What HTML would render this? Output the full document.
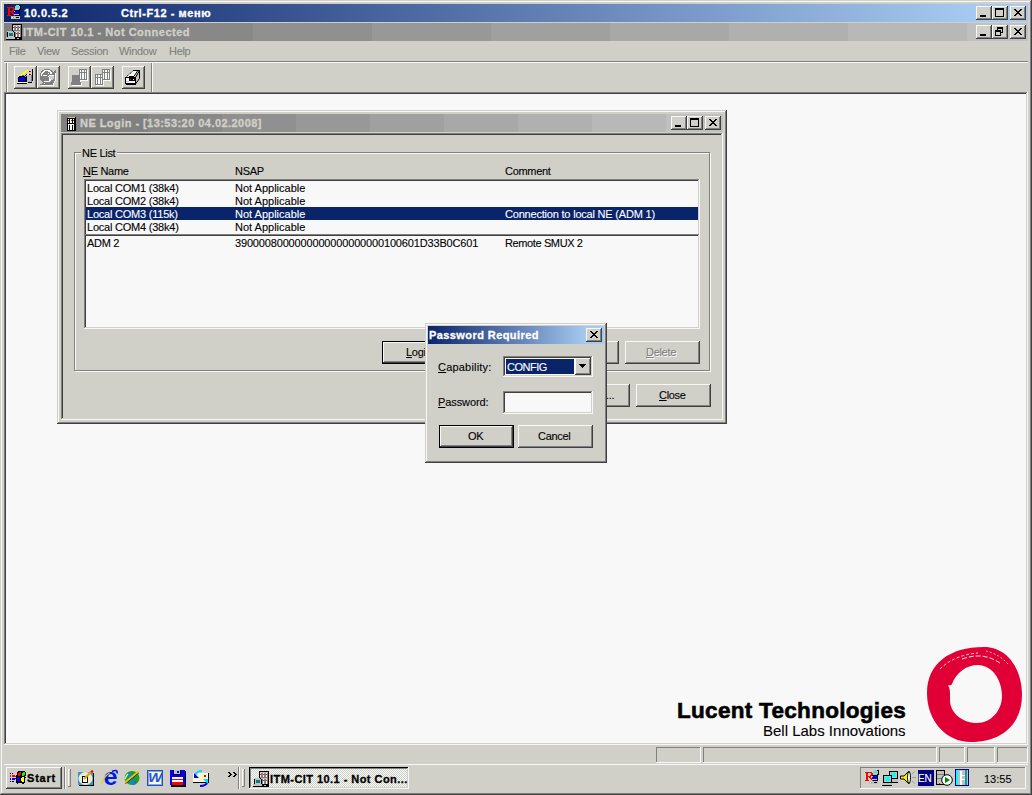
<!DOCTYPE html><html><head><meta charset="utf-8"><style>
html,body{margin:0;padding:0;width:1032px;height:795px;overflow:hidden;background:#D0D0C8;position:relative}
.a{position:absolute;display:block}
.t{position:absolute;white-space:pre;font-family:"Liberation Sans",sans-serif;line-height:13px;-webkit-text-stroke:0.1px currentColor}
u{text-decoration:underline;text-decoration-thickness:1px;text-underline-offset:1px}
</style></head><body>
<div class="a" style="left:0px;top:0px;width:1032px;height:795px;background:#D0D0C8;box-shadow:inset -1px -1px #404040,inset 1px 1px #D0D0C8,inset -2px -2px #808080,inset 2px 2px #F8F8F8;"></div>
<div class="a" style="left:4px;top:4px;width:1024px;height:18px;background:linear-gradient(to right,#0A246A 0%,#A6CAF0 95%,#A6CAF0 100%);"></div>
<div class="t" style="left:24px;top:7px;font-size:11px;font-weight:bold;color:#fff;letter-spacing:0.55px;-webkit-text-stroke:0.3px currentColor;">10.0.5.2</div>
<div class="t" style="left:121px;top:7px;font-size:11px;font-weight:bold;color:#fff;letter-spacing:0.57px;-webkit-text-stroke:0.3px currentColor;">Ctrl-F12 - меню</div>
<div class="a" style="left:976px;top:6px;width:16px;height:14px;background:#D0D0C8;box-shadow:inset -1px -1px #404040,inset 1px 1px #F8F8F8,inset -2px -2px #808080,inset 2px 2px #D0D0C8;"></div>
<div class="a" style="left:980px;top:15px;width:6px;height:2px;background:#000;"></div>
<div class="a" style="left:992px;top:6px;width:16px;height:14px;background:#D0D0C8;box-shadow:inset -1px -1px #404040,inset 1px 1px #F8F8F8,inset -2px -2px #808080,inset 2px 2px #D0D0C8;"></div>
<div class="a" style="left:995px;top:8px;width:9px;height:9px;border:1px solid #000;border-top-width:2px;box-sizing:border-box;"></div>
<div class="a" style="left:1010px;top:6px;width:16px;height:14px;background:#D0D0C8;box-shadow:inset -1px -1px #404040,inset 1px 1px #F8F8F8,inset -2px -2px #808080,inset 2px 2px #D0D0C8;"></div>
<svg class="a" style="left:1014px;top:9px" width="8" height="7" viewBox="0 0 8 7" shape-rendering="crispEdges"><rect x="0" y="0" width="1" height="1" fill="#000"/><rect x="1" y="0" width="1" height="1" fill="#000"/><rect x="6" y="0" width="1" height="1" fill="#000"/><rect x="7" y="0" width="1" height="1" fill="#000"/><rect x="1" y="1" width="1" height="1" fill="#000"/><rect x="2" y="1" width="1" height="1" fill="#000"/><rect x="5" y="1" width="1" height="1" fill="#000"/><rect x="6" y="1" width="1" height="1" fill="#000"/><rect x="2" y="2" width="1" height="1" fill="#000"/><rect x="3" y="2" width="1" height="1" fill="#000"/><rect x="4" y="2" width="1" height="1" fill="#000"/><rect x="5" y="2" width="1" height="1" fill="#000"/><rect x="3" y="3" width="1" height="1" fill="#000"/><rect x="4" y="3" width="1" height="1" fill="#000"/><rect x="2" y="4" width="1" height="1" fill="#000"/><rect x="3" y="4" width="1" height="1" fill="#000"/><rect x="4" y="4" width="1" height="1" fill="#000"/><rect x="5" y="4" width="1" height="1" fill="#000"/><rect x="1" y="5" width="1" height="1" fill="#000"/><rect x="2" y="5" width="1" height="1" fill="#000"/><rect x="5" y="5" width="1" height="1" fill="#000"/><rect x="6" y="5" width="1" height="1" fill="#000"/><rect x="0" y="6" width="1" height="1" fill="#000"/><rect x="1" y="6" width="1" height="1" fill="#000"/><rect x="6" y="6" width="1" height="1" fill="#000"/><rect x="7" y="6" width="1" height="1" fill="#000"/></svg>
<div class="a" style="left:4px;top:23px;width:1024px;height:18px;background:linear-gradient(to right,#808080 0.000%,#808080 12.695%,#888888 12.695%,#888888 24.316%,#909090 24.316%,#909090 35.938%,#989898 35.938%,#989898 47.559%,#a0a0a0 47.559%,#a0a0a0 59.180%,#a8a8a8 59.180%,#a8a8a8 70.801%,#b0b0b0 70.801%,#b0b0b0 82.422%,#b8b8b8 82.422%,#b8b8b8 94.043%,#c0c0c0 94.043%,#c0c0c0 100.000%);"></div>
<div class="t" style="left:23px;top:26px;font-size:11px;font-weight:bold;color:#D0D0C8;letter-spacing:0.51px;-webkit-text-stroke:0.3px currentColor;">ITM-CIT 10.1 - Not Connected</div>
<div class="a" style="left:976px;top:25px;width:16px;height:14px;background:#D0D0C8;box-shadow:inset -1px -1px #404040,inset 1px 1px #F8F8F8,inset -2px -2px #808080,inset 2px 2px #D0D0C8;"></div>
<div class="a" style="left:980px;top:34px;width:6px;height:2px;background:#000;"></div>
<div class="a" style="left:992px;top:25px;width:16px;height:14px;background:#D0D0C8;box-shadow:inset -1px -1px #404040,inset 1px 1px #F8F8F8,inset -2px -2px #808080,inset 2px 2px #D0D0C8;"></div>
<div class="a" style="left:997px;top:27px;width:6px;height:6px;border:1px solid #000;border-top-width:2px;box-sizing:border-box;"></div>
<div class="a" style="left:995px;top:30px;width:6px;height:6px;background:#D0D0C8;border:1px solid #000;border-top-width:2px;box-sizing:border-box;"></div>
<div class="a" style="left:1010px;top:25px;width:16px;height:14px;background:#D0D0C8;box-shadow:inset -1px -1px #404040,inset 1px 1px #F8F8F8,inset -2px -2px #808080,inset 2px 2px #D0D0C8;"></div>
<svg class="a" style="left:1014px;top:28px" width="8" height="7" viewBox="0 0 8 7" shape-rendering="crispEdges"><rect x="0" y="0" width="1" height="1" fill="#000"/><rect x="1" y="0" width="1" height="1" fill="#000"/><rect x="6" y="0" width="1" height="1" fill="#000"/><rect x="7" y="0" width="1" height="1" fill="#000"/><rect x="1" y="1" width="1" height="1" fill="#000"/><rect x="2" y="1" width="1" height="1" fill="#000"/><rect x="5" y="1" width="1" height="1" fill="#000"/><rect x="6" y="1" width="1" height="1" fill="#000"/><rect x="2" y="2" width="1" height="1" fill="#000"/><rect x="3" y="2" width="1" height="1" fill="#000"/><rect x="4" y="2" width="1" height="1" fill="#000"/><rect x="5" y="2" width="1" height="1" fill="#000"/><rect x="3" y="3" width="1" height="1" fill="#000"/><rect x="4" y="3" width="1" height="1" fill="#000"/><rect x="2" y="4" width="1" height="1" fill="#000"/><rect x="3" y="4" width="1" height="1" fill="#000"/><rect x="4" y="4" width="1" height="1" fill="#000"/><rect x="5" y="4" width="1" height="1" fill="#000"/><rect x="1" y="5" width="1" height="1" fill="#000"/><rect x="2" y="5" width="1" height="1" fill="#000"/><rect x="5" y="5" width="1" height="1" fill="#000"/><rect x="6" y="5" width="1" height="1" fill="#000"/><rect x="0" y="6" width="1" height="1" fill="#000"/><rect x="1" y="6" width="1" height="1" fill="#000"/><rect x="6" y="6" width="1" height="1" fill="#000"/><rect x="7" y="6" width="1" height="1" fill="#000"/></svg>
<div class="t" style="left:9px;top:45px;font-size:11px;font-weight:normal;color:#808080;letter-spacing:-0.3px;">File</div>
<div class="t" style="left:37px;top:45px;font-size:11px;font-weight:normal;color:#808080;letter-spacing:-0.3px;">View</div>
<div class="t" style="left:71px;top:45px;font-size:11px;font-weight:normal;color:#808080;letter-spacing:-0.3px;">Session</div>
<div class="t" style="left:119px;top:45px;font-size:11px;font-weight:normal;color:#808080;letter-spacing:-0.3px;">Window</div>
<div class="t" style="left:169px;top:45px;font-size:11px;font-weight:normal;color:#808080;letter-spacing:-0.3px;">Help</div>
<div class="a" style="left:4px;top:61px;width:1024px;height:1px;background:#808080;"></div>
<div class="a" style="left:4px;top:62px;width:1024px;height:1px;background:#F8F8F8;"></div>
<div class="a" style="left:6px;top:63px;width:1px;height:29px;background:#808080;"></div>
<div class="a" style="left:7px;top:63px;width:1px;height:29px;background:#F8F8F8;"></div>
<div class="a" style="left:14px;top:66px;width:23px;height:23px;background:#D0D0C8;box-shadow:inset -1px -1px #404040,inset 1px 1px #F8F8F8,inset -2px -2px #808080,inset 2px 2px #D0D0C8;"></div>
<div class="a" style="left:37px;top:66px;width:23px;height:23px;background:#D0D0C8;box-shadow:inset -1px -1px #404040,inset 1px 1px #F8F8F8,inset -2px -2px #808080,inset 2px 2px #D0D0C8;"></div>
<div class="a" style="left:68px;top:66px;width:23px;height:23px;background:#D0D0C8;box-shadow:inset -1px -1px #404040,inset 1px 1px #F8F8F8,inset -2px -2px #808080,inset 2px 2px #D0D0C8;"></div>
<div class="a" style="left:91px;top:66px;width:23px;height:23px;background:#D0D0C8;box-shadow:inset -1px -1px #404040,inset 1px 1px #F8F8F8,inset -2px -2px #808080,inset 2px 2px #D0D0C8;"></div>
<div class="a" style="left:122px;top:66px;width:23px;height:23px;background:#D0D0C8;box-shadow:inset -1px -1px #404040,inset 1px 1px #F8F8F8,inset -2px -2px #808080,inset 2px 2px #D0D0C8;"></div>
<div class="a" style="left:151px;top:63px;width:1px;height:29px;background:#808080;"></div>
<div class="a" style="left:152px;top:63px;width:1px;height:29px;background:#F8F8F8;"></div>
<div class="a" style="left:4px;top:92px;width:1024px;height:653px;background:#F8F8F8;box-shadow:inset -1px -1px #F8F8F8,inset 1px 1px #808080,inset -2px -2px #D0D0C8,inset 2px 2px #404040;"></div>
<div class="a" style="left:656px;top:747px;width:45px;height:16px;background:#D0D0C8;box-shadow:inset -1px -1px #F8F8F8,inset 1px 1px #808080;"></div>
<div class="a" style="left:703px;top:747px;width:234px;height:16px;background:#D0D0C8;box-shadow:inset -1px -1px #F8F8F8,inset 1px 1px #808080;"></div>
<div class="a" style="left:939px;top:747px;width:26px;height:16px;background:#D0D0C8;box-shadow:inset -1px -1px #F8F8F8,inset 1px 1px #808080;"></div>
<div class="a" style="left:967px;top:747px;width:28px;height:16px;background:#D0D0C8;box-shadow:inset -1px -1px #F8F8F8,inset 1px 1px #808080;"></div>
<div class="a" style="left:997px;top:747px;width:31px;height:16px;background:#D0D0C8;box-shadow:inset -1px -1px #F8F8F8,inset 1px 1px #808080;"></div>
<div class="a" style="left:4px;top:764px;width:1024px;height:1px;background:#F8F8F8;"></div>
<div class="a" style="left:6px;top:767px;width:56px;height:22px;background:#D0D0C8;box-shadow:inset -1px -1px #404040,inset 1px 1px #F8F8F8,inset -2px -2px #808080,inset 2px 2px #D0D0C8;"></div>
<div class="t" style="left:27px;top:772px;font-size:11px;font-weight:bold;color:#000;letter-spacing:0.8px;-webkit-text-stroke:0.3px currentColor;">Start</div>
<div class="a" style="left:64px;top:767px;width:1px;height:22px;background:#808080;"></div>
<div class="a" style="left:65px;top:767px;width:1px;height:22px;background:#F8F8F8;"></div>
<div class="a" style="left:68px;top:769px;width:3px;height:18px;box-shadow:inset -1px -1px #808080,inset 1px 1px #F8F8F8;"></div>
<div class="a" style="left:238px;top:767px;width:1px;height:22px;background:#808080;"></div>
<div class="a" style="left:239px;top:767px;width:1px;height:22px;background:#F8F8F8;"></div>
<div class="a" style="left:242px;top:769px;width:3px;height:18px;box-shadow:inset -1px -1px #808080,inset 1px 1px #F8F8F8;"></div>
<div class="a" style="left:249px;top:767px;width:160px;height:22px;background-color:#D0D0C8;background-image:repeating-conic-gradient(#F8FCF8 0 25%,#D0D0C8 0 50%);background-size:2px 2px;box-shadow:inset -1px -1px #F8F8F8,inset 1px 1px #000,inset -2px -2px #D0D0C8,inset 2px 2px #808080;"></div>
<div class="t" style="left:270px;top:773px;font-size:11px;font-weight:bold;color:#000;letter-spacing:0.45px;-webkit-text-stroke:0.3px currentColor;">ITM-CIT 10.1 - Not Con...</div>
<div class="a" style="left:860px;top:767px;width:166px;height:22px;background:#D0D0C8;box-shadow:inset -1px -1px #F8F8F8,inset 1px 1px #808080;"></div>
<div class="t" style="left:984px;top:773px;font-size:11px;font-weight:normal;color:#000;letter-spacing:0px;">13:55</div>
<div class="a" style="left:57px;top:110px;width:670px;height:314px;background:#D0D0C8;box-shadow:inset -1px -1px #404040,inset 1px 1px #D0D0C8,inset -2px -2px #808080,inset 2px 2px #F8F8F8;"></div>
<div class="a" style="left:61px;top:114px;width:662px;height:18px;background:linear-gradient(to right,#808080 0.000%,#808080 13.142%,#888888 13.142%,#888888 24.320%,#909090 24.320%,#909090 35.498%,#989898 35.498%,#989898 46.677%,#a0a0a0 46.677%,#a0a0a0 57.855%,#a8a8a8 57.855%,#a8a8a8 69.033%,#b0b0b0 69.033%,#b0b0b0 80.211%,#b8b8b8 80.211%,#b8b8b8 91.390%,#c0c0c0 91.390%,#c0c0c0 100.000%);"></div>
<div class="t" style="left:80px;top:117px;font-size:11px;font-weight:bold;color:#D0D0C8;letter-spacing:0.45px;-webkit-text-stroke:0.3px currentColor;">NE Login - [13:53:20 04.02.2008]</div>
<div class="a" style="left:671px;top:116px;width:16px;height:14px;background:#D0D0C8;box-shadow:inset -1px -1px #404040,inset 1px 1px #F8F8F8,inset -2px -2px #808080,inset 2px 2px #D0D0C8;"></div>
<div class="a" style="left:675px;top:125px;width:6px;height:2px;background:#000;"></div>
<div class="a" style="left:687px;top:116px;width:16px;height:14px;background:#D0D0C8;box-shadow:inset -1px -1px #404040,inset 1px 1px #F8F8F8,inset -2px -2px #808080,inset 2px 2px #D0D0C8;"></div>
<div class="a" style="left:690px;top:118px;width:9px;height:9px;border:1px solid #000;border-top-width:2px;box-sizing:border-box;"></div>
<div class="a" style="left:705px;top:116px;width:16px;height:14px;background:#D0D0C8;box-shadow:inset -1px -1px #404040,inset 1px 1px #F8F8F8,inset -2px -2px #808080,inset 2px 2px #D0D0C8;"></div>
<svg class="a" style="left:709px;top:119px" width="8" height="7" viewBox="0 0 8 7" shape-rendering="crispEdges"><rect x="0" y="0" width="1" height="1" fill="#000"/><rect x="1" y="0" width="1" height="1" fill="#000"/><rect x="6" y="0" width="1" height="1" fill="#000"/><rect x="7" y="0" width="1" height="1" fill="#000"/><rect x="1" y="1" width="1" height="1" fill="#000"/><rect x="2" y="1" width="1" height="1" fill="#000"/><rect x="5" y="1" width="1" height="1" fill="#000"/><rect x="6" y="1" width="1" height="1" fill="#000"/><rect x="2" y="2" width="1" height="1" fill="#000"/><rect x="3" y="2" width="1" height="1" fill="#000"/><rect x="4" y="2" width="1" height="1" fill="#000"/><rect x="5" y="2" width="1" height="1" fill="#000"/><rect x="3" y="3" width="1" height="1" fill="#000"/><rect x="4" y="3" width="1" height="1" fill="#000"/><rect x="2" y="4" width="1" height="1" fill="#000"/><rect x="3" y="4" width="1" height="1" fill="#000"/><rect x="4" y="4" width="1" height="1" fill="#000"/><rect x="5" y="4" width="1" height="1" fill="#000"/><rect x="1" y="5" width="1" height="1" fill="#000"/><rect x="2" y="5" width="1" height="1" fill="#000"/><rect x="5" y="5" width="1" height="1" fill="#000"/><rect x="6" y="5" width="1" height="1" fill="#000"/><rect x="0" y="6" width="1" height="1" fill="#000"/><rect x="1" y="6" width="1" height="1" fill="#000"/><rect x="6" y="6" width="1" height="1" fill="#000"/><rect x="7" y="6" width="1" height="1" fill="#000"/></svg>
<div class="a" style="left:61px;top:133px;width:662px;height:287px;background:#D0D0C8;box-shadow:inset -1px -1px #F8F8F8,inset 1px 1px #808080,inset -2px -2px #D0D0C8,inset 2px 2px #404040;"></div>
<div class="a" style="left:75px;top:153px;width:636px;height:219px;border:1px solid #F8F8F8;box-sizing:border-box;"></div>
<div class="a" style="left:74px;top:152px;width:636px;height:219px;border:1px solid #808080;box-sizing:border-box;"></div>
<div class="a" style="left:81px;top:145px;width:36px;height:13px;background:#D0D0C8;"></div>
<div class="t" style="left:82px;top:147px;font-size:11px;font-weight:normal;color:#000;letter-spacing:-0.3px;">NE List</div>
<div class="t" style="left:83px;top:165px;font-size:11px;font-weight:normal;color:#000;letter-spacing:-0.3px;"><u>N</u>E Name</div>
<div class="t" style="left:235px;top:165px;font-size:11px;font-weight:normal;color:#000;letter-spacing:-0.3px;">NSAP</div>
<div class="t" style="left:505px;top:165px;font-size:11px;font-weight:normal;color:#000;letter-spacing:-0.3px;">Comment</div>
<div class="a" style="left:84px;top:179px;width:616px;height:62px;background:#F8F8F8;box-shadow:inset -1px -1px #F8F8F8,inset 1px 1px #808080,inset -2px -2px #D0D0C8,inset 2px 2px #404040;"></div>
<div class="t" style="left:87px;top:182px;font-size:11px;font-weight:normal;color:#000;letter-spacing:-0.22px;">Local COM1 (38k4)</div>
<div class="t" style="left:235px;top:182px;font-size:11px;font-weight:normal;color:#000;letter-spacing:0px;">Not Applicable</div>
<div class="t" style="left:87px;top:195px;font-size:11px;font-weight:normal;color:#000;letter-spacing:-0.22px;">Local COM2 (38k4)</div>
<div class="t" style="left:235px;top:195px;font-size:11px;font-weight:normal;color:#000;letter-spacing:0px;">Not Applicable</div>
<div class="a" style="left:86px;top:207px;width:612px;height:13px;background:#0A246A;"></div>
<div class="t" style="left:87px;top:208px;font-size:11px;font-weight:normal;color:#fff;letter-spacing:-0.22px;">Local COM3 (115k)</div>
<div class="t" style="left:235px;top:208px;font-size:11px;font-weight:normal;color:#fff;letter-spacing:0px;">Not Applicable</div>
<div class="t" style="left:505px;top:208px;font-size:11px;font-weight:normal;color:#fff;letter-spacing:-0.2px;">Connection to local NE (ADM 1)</div>
<div class="t" style="left:87px;top:221px;font-size:11px;font-weight:normal;color:#000;letter-spacing:-0.22px;">Local COM4 (38k4)</div>
<div class="t" style="left:235px;top:221px;font-size:11px;font-weight:normal;color:#000;letter-spacing:0px;">Not Applicable</div>
<div class="a" style="left:84px;top:234px;width:616px;height:95px;background:#F8F8F8;box-shadow:inset -1px -1px #F8F8F8,inset 1px 1px #808080,inset -2px -2px #D0D0C8,inset 2px 2px #404040;"></div>
<div class="t" style="left:87px;top:237px;font-size:11px;font-weight:normal;color:#000;letter-spacing:-0.3px;">ADM 2</div>
<div class="t" style="left:235px;top:237px;font-size:11px;font-weight:normal;color:#000;letter-spacing:-0.16px;">3900008000000000000000000100601D33B0C601</div>
<div class="t" style="left:505px;top:237px;font-size:11px;font-weight:normal;color:#000;letter-spacing:-0.38px;">Remote SMUX 2</div>
<div class="a" style="left:382px;top:341px;width:75px;height:23px;background:#000;"></div>
<div class="a" style="left:383px;top:342px;width:73px;height:21px;background:#D0D0C8;box-shadow:inset -1px -1px #404040,inset 1px 1px #F8F8F8,inset -2px -2px #808080,inset 2px 2px #D0D0C8;"></div>
<div class="t" style="left:406px;top:346px;font-size:11px;font-weight:normal;color:#000;letter-spacing:-0.3px;"><u>L</u>ogin</div>
<div class="a" style="left:463px;top:341px;width:75px;height:23px;background:#D0D0C8;box-shadow:inset -1px -1px #404040,inset 1px 1px #F8F8F8,inset -2px -2px #808080,inset 2px 2px #D0D0C8;"></div>
<div class="a" style="left:544px;top:341px;width:75px;height:23px;background:#D0D0C8;box-shadow:inset -1px -1px #404040,inset 1px 1px #F8F8F8,inset -2px -2px #808080,inset 2px 2px #D0D0C8;"></div>
<div class="a" style="left:625px;top:341px;width:75px;height:23px;background:#D0D0C8;box-shadow:inset -1px -1px #404040,inset 1px 1px #F8F8F8,inset -2px -2px #808080,inset 2px 2px #D0D0C8;"></div>
<div class="t" style="left:647px;top:347px;font-size:11px;font-weight:normal;color:#F8F8F8;letter-spacing:-0.3px;"><u>D</u>elete</div>
<div class="t" style="left:646px;top:346px;font-size:11px;font-weight:normal;color:#808080;letter-spacing:-0.3px;"><u>D</u>elete</div>
<div class="a" style="left:555px;top:384px;width:75px;height:23px;background:#D0D0C8;box-shadow:inset -1px -1px #404040,inset 1px 1px #F8F8F8,inset -2px -2px #808080,inset 2px 2px #D0D0C8;"></div>
<div class="t" style="left:606px;top:389px;font-size:11px;font-weight:normal;color:#000;letter-spacing:-0.3px;">...</div>
<div class="a" style="left:636px;top:384px;width:75px;height:23px;background:#D0D0C8;box-shadow:inset -1px -1px #404040,inset 1px 1px #F8F8F8,inset -2px -2px #808080,inset 2px 2px #D0D0C8;"></div>
<div class="t" style="left:659px;top:389px;font-size:11px;font-weight:normal;color:#000;letter-spacing:-0.3px;"><u>C</u>lose</div>
<div class="a" style="left:425px;top:323px;width:182px;height:140px;background:#D0D0C8;box-shadow:inset -1px -1px #404040,inset 1px 1px #D0D0C8,inset -2px -2px #808080,inset 2px 2px #F8F8F8;"></div>
<div class="a" style="left:428px;top:326px;width:176px;height:18px;background:linear-gradient(to right,#0A246A 0%,#A6CAF0 90%,#A6CAF0 100%);"></div>
<div class="t" style="left:429px;top:329px;font-size:11px;font-weight:bold;color:#fff;letter-spacing:0.42px;-webkit-text-stroke:0.3px currentColor;">Password Required</div>
<div class="a" style="left:586px;top:328px;width:16px;height:14px;background:#D0D0C8;box-shadow:inset -1px -1px #404040,inset 1px 1px #F8F8F8,inset -2px -2px #808080,inset 2px 2px #D0D0C8;"></div>
<svg class="a" style="left:590px;top:331px" width="8" height="7" viewBox="0 0 8 7" shape-rendering="crispEdges"><rect x="0" y="0" width="1" height="1" fill="#000"/><rect x="1" y="0" width="1" height="1" fill="#000"/><rect x="6" y="0" width="1" height="1" fill="#000"/><rect x="7" y="0" width="1" height="1" fill="#000"/><rect x="1" y="1" width="1" height="1" fill="#000"/><rect x="2" y="1" width="1" height="1" fill="#000"/><rect x="5" y="1" width="1" height="1" fill="#000"/><rect x="6" y="1" width="1" height="1" fill="#000"/><rect x="2" y="2" width="1" height="1" fill="#000"/><rect x="3" y="2" width="1" height="1" fill="#000"/><rect x="4" y="2" width="1" height="1" fill="#000"/><rect x="5" y="2" width="1" height="1" fill="#000"/><rect x="3" y="3" width="1" height="1" fill="#000"/><rect x="4" y="3" width="1" height="1" fill="#000"/><rect x="2" y="4" width="1" height="1" fill="#000"/><rect x="3" y="4" width="1" height="1" fill="#000"/><rect x="4" y="4" width="1" height="1" fill="#000"/><rect x="5" y="4" width="1" height="1" fill="#000"/><rect x="1" y="5" width="1" height="1" fill="#000"/><rect x="2" y="5" width="1" height="1" fill="#000"/><rect x="5" y="5" width="1" height="1" fill="#000"/><rect x="6" y="5" width="1" height="1" fill="#000"/><rect x="0" y="6" width="1" height="1" fill="#000"/><rect x="1" y="6" width="1" height="1" fill="#000"/><rect x="6" y="6" width="1" height="1" fill="#000"/><rect x="7" y="6" width="1" height="1" fill="#000"/></svg>
<div class="t" style="left:438px;top:361px;font-size:11px;font-weight:normal;color:#000;letter-spacing:0.2px;"><u>C</u>apability:</div>
<div class="a" style="left:503px;top:356px;width:90px;height:21px;background:#F8F8F8;box-shadow:inset -1px -1px #F8F8F8,inset 1px 1px #808080,inset -2px -2px #D0D0C8,inset 2px 2px #404040;"></div>
<div class="a" style="left:506px;top:359px;width:68px;height:15px;background:#0A246A;"></div>
<div class="t" style="left:507px;top:361px;font-size:11px;font-weight:normal;color:#fff;letter-spacing:-0.5px;">CONFIG</div>
<div class="a" style="left:575px;top:358px;width:16px;height:17px;background:#D0D0C8;box-shadow:inset -1px -1px #404040,inset 1px 1px #F8F8F8,inset -2px -2px #808080,inset 2px 2px #D0D0C8;"></div>
<svg class="a" style="left:579px;top:364px" width="7" height="4" viewBox="0 0 7 4" shape-rendering="crispEdges"><rect x="0" y="0" width="7" height="1" fill="#000"/><rect x="1" y="1" width="5" height="1" fill="#000"/><rect x="2" y="2" width="3" height="1" fill="#000"/><rect x="3" y="3" width="1" height="1" fill="#000"/></svg>
<div class="t" style="left:438px;top:396px;font-size:11px;font-weight:normal;color:#000;letter-spacing:-0.1px;"><u>P</u>assword:</div>
<div class="a" style="left:503px;top:391px;width:90px;height:23px;background:#F8F8F8;box-shadow:inset -1px -1px #F8F8F8,inset 1px 1px #808080,inset -2px -2px #D0D0C8,inset 2px 2px #404040;"></div>
<div class="a" style="left:439px;top:425px;width:75px;height:23px;background:#000;"></div>
<div class="a" style="left:440px;top:426px;width:73px;height:21px;background:#D0D0C8;box-shadow:inset -1px -1px #404040,inset 1px 1px #F8F8F8,inset -2px -2px #808080,inset 2px 2px #D0D0C8;"></div>
<div class="t" style="left:468px;top:430px;font-size:11px;font-weight:normal;color:#000;letter-spacing:-0.3px;">OK</div>
<div class="a" style="left:518px;top:425px;width:75px;height:23px;background:#D0D0C8;box-shadow:inset -1px -1px #404040,inset 1px 1px #F8F8F8,inset -2px -2px #808080,inset 2px 2px #D0D0C8;"></div>
<div class="t" style="left:538px;top:430px;font-size:11px;font-weight:normal;color:#000;letter-spacing:-0.3px;">Cancel</div>
<div class="t" style="left:677px;top:698px;font-size:22.5px;font-weight:bold;color:#000;letter-spacing:0.3px;line-height:25px;-webkit-text-stroke:0.6px #000;">Lucent Technologies</div>
<div class="t" style="left:763px;top:722px;font-size:15px;font-weight:normal;color:#000;letter-spacing:0px;line-height:17px;">Bell Labs Innovations</div>
<svg class="a" style="left:926px;top:645px" width="98" height="99" viewBox="0 0 98 99" shape-rendering="crispEdges"><g shape-rendering="geometricPrecision"><path fill="#E10036" fill-rule="evenodd" d="M58,2 C80,2 96,22 96,50 C96,79 76,97 45,97 C20,97 1,76 1,48 C1,19 23,2 58,2 Z M52,20 C65.3,20 76,33.9 76,51 C76,65.9 64.8,78 51,78 C36.1,78 24,67.7 24,55 C24,49 24.5,44 22,40.5 C24,40 25.5,40.5 26,39 C30,28 40,20 52,20 Z"/><path d="M14,24 C24,14 38,9 52,8" stroke="#F8F8F8" stroke-width="0.8" fill="none" stroke-dasharray="3,2"/><path d="M36,14 C50,9 62,10 74,18" stroke="#F8F8F8" stroke-width="0.9" fill="none" stroke-dasharray="5,2"/><path d="M60,6 C68,8 76,12 82,19" stroke="#F8F8F8" stroke-width="0.7" fill="none" stroke-dasharray="2,2"/></g></svg>
<svg class="a" style="left:6px;top:5px" width="16" height="14" shape-rendering="crispEdges"><rect x="10" y="0" width="3" height="1" fill="#C0C0C0"/><rect x="13" y="0" width="2" height="1" fill="#000000"/><rect x="9" y="1" width="1" height="1" fill="#C0C0C0"/><rect x="10" y="1" width="3" height="1" fill="#00FFFF"/><rect x="13" y="1" width="1" height="1" fill="#C0C0C0"/><rect x="14" y="1" width="1" height="1" fill="#000000"/><rect x="1" y="2" width="7" height="1" fill="#FF0000"/><rect x="9" y="2" width="1" height="1" fill="#C0C0C0"/><rect x="10" y="2" width="3" height="1" fill="#00FFFF"/><rect x="13" y="2" width="1" height="1" fill="#C0C0C0"/><rect x="14" y="2" width="1" height="1" fill="#000000"/><rect x="2" y="3" width="2" height="1" fill="#FF0000"/><rect x="7" y="3" width="2" height="1" fill="#FF0000"/><rect x="9" y="3" width="5" height="1" fill="#C0C0C0"/><rect x="14" y="3" width="1" height="1" fill="#000000"/><rect x="2" y="4" width="2" height="1" fill="#FF0000"/><rect x="7" y="4" width="2" height="1" fill="#FF0000"/><rect x="9" y="4" width="4" height="1" fill="#C0C0C0"/><rect x="13" y="4" width="2" height="1" fill="#000000"/><rect x="2" y="5" width="2" height="1" fill="#FF0000"/><rect x="6" y="5" width="2" height="1" fill="#FF0000"/><rect x="8" y="5" width="6" height="1" fill="#000000"/><rect x="2" y="6" width="5" height="1" fill="#FF0000"/><rect x="8" y="6" width="1" height="1" fill="#00FFFF"/><rect x="9" y="6" width="4" height="1" fill="#0000FF"/><rect x="13" y="6" width="1" height="1" fill="#000000"/><rect x="2" y="7" width="2" height="1" fill="#FF0000"/><rect x="5" y="7" width="2" height="1" fill="#FF0000"/><rect x="8" y="7" width="5" height="1" fill="#0000FF"/><rect x="13" y="7" width="1" height="1" fill="#000000"/><rect x="2" y="8" width="2" height="1" fill="#FF0000"/><rect x="6" y="8" width="2" height="1" fill="#FF0000"/><rect x="8" y="8" width="5" height="1" fill="#0000FF"/><rect x="13" y="8" width="1" height="1" fill="#000000"/><rect x="2" y="9" width="2" height="1" fill="#FF0000"/><rect x="7" y="9" width="1" height="1" fill="#FF0000"/><rect x="8" y="9" width="5" height="1" fill="#C0C0C0"/><rect x="13" y="9" width="1" height="1" fill="#000000"/><rect x="1" y="10" width="4" height="1" fill="#FF0000"/><rect x="8" y="10" width="1" height="1" fill="#FF0000"/><rect x="9" y="10" width="5" height="1" fill="#000000"/><rect x="5" y="11" width="9" height="1" fill="#C0C0C0"/><rect x="5" y="12" width="1" height="1" fill="#C0C0C0"/><rect x="6" y="12" width="1" height="1" fill="#F8FCF8"/><rect x="7" y="12" width="1" height="1" fill="#00FF00"/><rect x="8" y="12" width="2" height="1" fill="#C0C0C0"/><rect x="10" y="12" width="3" height="1" fill="#000000"/><rect x="13" y="12" width="1" height="1" fill="#C0C0C0"/><rect x="5" y="13" width="9" height="1" fill="#C0C0C0"/></svg>
<svg class="a" style="left:6px;top:24px" width="16" height="16" shape-rendering="crispEdges"><rect x="6" y="0" width="10" height="1" fill="#000000"/><rect x="6" y="1" width="1" height="1" fill="#000000"/><rect x="7" y="1" width="8" height="1" fill="#C0C0C0"/><rect x="15" y="1" width="1" height="1" fill="#000000"/><rect x="6" y="2" width="1" height="1" fill="#000000"/><rect x="7" y="2" width="1" height="1" fill="#F8FCF8"/><rect x="8" y="2" width="2" height="1" fill="#808080"/><rect x="10" y="2" width="1" height="1" fill="#F8FCF8"/><rect x="11" y="2" width="2" height="1" fill="#808080"/><rect x="13" y="2" width="1" height="1" fill="#F8FCF8"/><rect x="14" y="2" width="1" height="1" fill="#808080"/><rect x="15" y="2" width="1" height="1" fill="#000000"/><rect x="6" y="3" width="1" height="1" fill="#000000"/><rect x="7" y="3" width="1" height="1" fill="#FF0000"/><rect x="8" y="3" width="2" height="1" fill="#808080"/><rect x="10" y="3" width="1" height="1" fill="#FF0000"/><rect x="11" y="3" width="2" height="1" fill="#808080"/><rect x="13" y="3" width="1" height="1" fill="#FF0000"/><rect x="14" y="3" width="1" height="1" fill="#808080"/><rect x="15" y="3" width="1" height="1" fill="#000000"/><rect x="6" y="4" width="1" height="1" fill="#000000"/><rect x="7" y="4" width="1" height="1" fill="#F8FCF8"/><rect x="8" y="4" width="2" height="1" fill="#808080"/><rect x="10" y="4" width="1" height="1" fill="#F8FCF8"/><rect x="11" y="4" width="2" height="1" fill="#808080"/><rect x="13" y="4" width="1" height="1" fill="#F8FCF8"/><rect x="14" y="4" width="1" height="1" fill="#808080"/><rect x="15" y="4" width="1" height="1" fill="#000000"/><rect x="6" y="5" width="1" height="1" fill="#000000"/><rect x="7" y="5" width="1" height="1" fill="#F8FCF8"/><rect x="8" y="5" width="2" height="1" fill="#808080"/><rect x="10" y="5" width="1" height="1" fill="#F8FCF8"/><rect x="11" y="5" width="2" height="1" fill="#808080"/><rect x="13" y="5" width="1" height="1" fill="#F8FCF8"/><rect x="14" y="5" width="1" height="1" fill="#808080"/><rect x="15" y="5" width="1" height="1" fill="#000000"/><rect x="6" y="6" width="1" height="1" fill="#000000"/><rect x="7" y="6" width="8" height="1" fill="#808080"/><rect x="15" y="6" width="1" height="1" fill="#000000"/><rect x="1" y="7" width="6" height="1" fill="#C0C0C0"/><rect x="7" y="7" width="1" height="1" fill="#000000"/><rect x="8" y="7" width="6" height="1" fill="#C0C0C0"/><rect x="14" y="7" width="1" height="1" fill="#808080"/><rect x="15" y="7" width="1" height="1" fill="#000000"/><rect x="1" y="8" width="1" height="1" fill="#000000"/><rect x="2" y="8" width="6" height="1" fill="#C0C0C0"/><rect x="8" y="8" width="1" height="1" fill="#000000"/><rect x="9" y="8" width="1" height="1" fill="#808080"/><rect x="10" y="8" width="1" height="1" fill="#F8FCF8"/><rect x="11" y="8" width="2" height="1" fill="#808080"/><rect x="13" y="8" width="1" height="1" fill="#F8FCF8"/><rect x="14" y="8" width="1" height="1" fill="#808080"/><rect x="15" y="8" width="1" height="1" fill="#000000"/><rect x="1" y="9" width="1" height="1" fill="#000000"/><rect x="2" y="9" width="1" height="1" fill="#C0C0C0"/><rect x="3" y="9" width="4" height="1" fill="#008080"/><rect x="7" y="9" width="1" height="1" fill="#C0C0C0"/><rect x="8" y="9" width="1" height="1" fill="#000000"/><rect x="9" y="9" width="1" height="1" fill="#808080"/><rect x="10" y="9" width="1" height="1" fill="#FF0000"/><rect x="11" y="9" width="2" height="1" fill="#808080"/><rect x="13" y="9" width="1" height="1" fill="#FF0000"/><rect x="14" y="9" width="1" height="1" fill="#808080"/><rect x="15" y="9" width="1" height="1" fill="#000000"/><rect x="1" y="10" width="1" height="1" fill="#000000"/><rect x="2" y="10" width="1" height="1" fill="#C0C0C0"/><rect x="3" y="10" width="4" height="1" fill="#008080"/><rect x="7" y="10" width="1" height="1" fill="#C0C0C0"/><rect x="8" y="10" width="1" height="1" fill="#000000"/><rect x="9" y="10" width="1" height="1" fill="#808080"/><rect x="10" y="10" width="1" height="1" fill="#F8FCF8"/><rect x="11" y="10" width="2" height="1" fill="#808080"/><rect x="13" y="10" width="1" height="1" fill="#F8FCF8"/><rect x="14" y="10" width="1" height="1" fill="#808080"/><rect x="15" y="10" width="1" height="1" fill="#000000"/><rect x="1" y="11" width="1" height="1" fill="#000000"/><rect x="2" y="11" width="1" height="1" fill="#C0C0C0"/><rect x="3" y="11" width="4" height="1" fill="#008080"/><rect x="7" y="11" width="1" height="1" fill="#C0C0C0"/><rect x="8" y="11" width="1" height="1" fill="#000000"/><rect x="9" y="11" width="1" height="1" fill="#808080"/><rect x="10" y="11" width="1" height="1" fill="#F8FCF8"/><rect x="11" y="11" width="2" height="1" fill="#808080"/><rect x="13" y="11" width="1" height="1" fill="#F8FCF8"/><rect x="14" y="11" width="1" height="1" fill="#808080"/><rect x="15" y="11" width="1" height="1" fill="#000000"/><rect x="1" y="12" width="1" height="1" fill="#000000"/><rect x="2" y="12" width="6" height="1" fill="#C0C0C0"/><rect x="8" y="12" width="1" height="1" fill="#000000"/><rect x="9" y="12" width="1" height="1" fill="#808080"/><rect x="10" y="12" width="1" height="1" fill="#F8FCF8"/><rect x="11" y="12" width="2" height="1" fill="#808080"/><rect x="13" y="12" width="1" height="1" fill="#F8FCF8"/><rect x="14" y="12" width="1" height="1" fill="#808080"/><rect x="15" y="12" width="1" height="1" fill="#000000"/><rect x="0" y="13" width="9" height="1" fill="#C0C0C0"/><rect x="9" y="13" width="7" height="1" fill="#000000"/><rect x="0" y="14" width="9" height="1" fill="#C0C0C0"/><rect x="9" y="14" width="2" height="1" fill="#000000"/><rect x="11" y="14" width="2" height="1" fill="#C0C0C0"/><rect x="13" y="14" width="3" height="1" fill="#000000"/><rect x="0" y="15" width="16" height="1" fill="#000000"/></svg>
<svg class="a" style="left:67px;top:117px" width="9" height="14" shape-rendering="crispEdges"><rect x="1" y="0" width="7" height="1" fill="#C0C0C0"/><rect x="8" y="0" width="1" height="1" fill="#000000"/><rect x="0" y="1" width="9" height="1" fill="#000000"/><rect x="0" y="2" width="1" height="1" fill="#000000"/><rect x="1" y="2" width="1" height="1" fill="#F8FCF8"/><rect x="2" y="2" width="1" height="1" fill="#000000"/><rect x="3" y="2" width="2" height="1" fill="#F8FCF8"/><rect x="5" y="2" width="1" height="1" fill="#000000"/><rect x="6" y="2" width="1" height="1" fill="#F8FCF8"/><rect x="7" y="2" width="2" height="1" fill="#000000"/><rect x="0" y="3" width="1" height="1" fill="#000000"/><rect x="1" y="3" width="1" height="1" fill="#FF0000"/><rect x="2" y="3" width="1" height="1" fill="#000000"/><rect x="3" y="3" width="1" height="1" fill="#F8FCF8"/><rect x="4" y="3" width="1" height="1" fill="#FF0000"/><rect x="5" y="3" width="1" height="1" fill="#000000"/><rect x="6" y="3" width="1" height="1" fill="#FF0000"/><rect x="7" y="3" width="2" height="1" fill="#000000"/><rect x="0" y="4" width="1" height="1" fill="#000000"/><rect x="1" y="4" width="1" height="1" fill="#F8FCF8"/><rect x="2" y="4" width="1" height="1" fill="#000000"/><rect x="3" y="4" width="2" height="1" fill="#F8FCF8"/><rect x="5" y="4" width="1" height="1" fill="#000000"/><rect x="6" y="4" width="1" height="1" fill="#F8FCF8"/><rect x="7" y="4" width="2" height="1" fill="#000000"/><rect x="0" y="5" width="1" height="1" fill="#000000"/><rect x="1" y="5" width="1" height="1" fill="#F8FCF8"/><rect x="2" y="5" width="1" height="1" fill="#000000"/><rect x="3" y="5" width="2" height="1" fill="#F8FCF8"/><rect x="5" y="5" width="1" height="1" fill="#000000"/><rect x="6" y="5" width="1" height="1" fill="#F8FCF8"/><rect x="7" y="5" width="2" height="1" fill="#000000"/><rect x="0" y="6" width="9" height="1" fill="#000000"/><rect x="0" y="7" width="1" height="1" fill="#000000"/><rect x="1" y="7" width="6" height="1" fill="#F8FCF8"/><rect x="7" y="7" width="2" height="1" fill="#000000"/><rect x="0" y="8" width="1" height="1" fill="#000000"/><rect x="1" y="8" width="1" height="1" fill="#F8FCF8"/><rect x="2" y="8" width="1" height="1" fill="#000000"/><rect x="3" y="8" width="2" height="1" fill="#F8FCF8"/><rect x="5" y="8" width="1" height="1" fill="#000000"/><rect x="6" y="8" width="1" height="1" fill="#F8FCF8"/><rect x="7" y="8" width="2" height="1" fill="#000000"/><rect x="0" y="9" width="1" height="1" fill="#000000"/><rect x="1" y="9" width="1" height="1" fill="#F8FCF8"/><rect x="2" y="9" width="1" height="1" fill="#000000"/><rect x="3" y="9" width="2" height="1" fill="#F8FCF8"/><rect x="5" y="9" width="1" height="1" fill="#000000"/><rect x="6" y="9" width="1" height="1" fill="#F8FCF8"/><rect x="7" y="9" width="2" height="1" fill="#000000"/><rect x="0" y="10" width="1" height="1" fill="#000000"/><rect x="1" y="10" width="1" height="1" fill="#F8FCF8"/><rect x="2" y="10" width="1" height="1" fill="#000000"/><rect x="3" y="10" width="2" height="1" fill="#F8FCF8"/><rect x="5" y="10" width="1" height="1" fill="#000000"/><rect x="6" y="10" width="1" height="1" fill="#F8FCF8"/><rect x="7" y="10" width="2" height="1" fill="#000000"/><rect x="0" y="11" width="1" height="1" fill="#000000"/><rect x="1" y="11" width="1" height="1" fill="#F8FCF8"/><rect x="2" y="11" width="1" height="1" fill="#000000"/><rect x="3" y="11" width="2" height="1" fill="#F8FCF8"/><rect x="5" y="11" width="1" height="1" fill="#000000"/><rect x="6" y="11" width="1" height="1" fill="#F8FCF8"/><rect x="7" y="11" width="2" height="1" fill="#000000"/><rect x="0" y="12" width="1" height="1" fill="#000000"/><rect x="1" y="12" width="1" height="1" fill="#F8FCF8"/><rect x="2" y="12" width="1" height="1" fill="#000000"/><rect x="3" y="12" width="2" height="1" fill="#F8FCF8"/><rect x="5" y="12" width="1" height="1" fill="#000000"/><rect x="6" y="12" width="1" height="1" fill="#F8FCF8"/><rect x="7" y="12" width="2" height="1" fill="#000000"/><rect x="0" y="13" width="9" height="1" fill="#000000"/></svg>
<svg class="a" style="left:16px;top:68px" width="17" height="16" shape-rendering="crispEdges"><rect x="16" y="1" width="1" height="1" fill="#000000"/><rect x="10" y="2" width="2" height="1" fill="#FFFF00"/><rect x="16" y="2" width="1" height="1" fill="#000000"/><rect x="9" y="3" width="2" height="1" fill="#FFFF00"/><rect x="13" y="3" width="1" height="1" fill="#000000"/><rect x="14" y="3" width="1" height="1" fill="#FF0000"/><rect x="16" y="3" width="1" height="1" fill="#000000"/><rect x="7" y="4" width="3" height="1" fill="#FFFF00"/><rect x="16" y="4" width="1" height="1" fill="#000000"/><rect x="6" y="5" width="3" height="1" fill="#FFFF00"/><rect x="16" y="5" width="1" height="1" fill="#000000"/><rect x="5" y="6" width="3" height="1" fill="#FFFF00"/><rect x="10" y="6" width="1" height="1" fill="#000000"/><rect x="11" y="6" width="2" height="1" fill="#F8FCF8"/><rect x="13" y="6" width="1" height="1" fill="#000000"/><rect x="14" y="6" width="1" height="1" fill="#FF0000"/><rect x="16" y="6" width="1" height="1" fill="#000000"/><rect x="4" y="7" width="2" height="1" fill="#FFFF00"/><rect x="6" y="7" width="2" height="1" fill="#008080"/><rect x="9" y="7" width="1" height="1" fill="#000000"/><rect x="10" y="7" width="5" height="1" fill="#C0C0C0"/><rect x="15" y="7" width="1" height="1" fill="#808080"/><rect x="16" y="7" width="1" height="1" fill="#000000"/><rect x="2" y="8" width="1" height="1" fill="#FFFF00"/><rect x="3" y="8" width="6" height="1" fill="#000000"/><rect x="10" y="8" width="1" height="1" fill="#000000"/><rect x="11" y="8" width="4" height="1" fill="#C0C0C0"/><rect x="15" y="8" width="1" height="1" fill="#808080"/><rect x="16" y="8" width="1" height="1" fill="#000000"/><rect x="2" y="9" width="1" height="1" fill="#000000"/><rect x="3" y="9" width="6" height="1" fill="#0000FF"/><rect x="9" y="9" width="2" height="1" fill="#000000"/><rect x="11" y="9" width="4" height="1" fill="#C0C0C0"/><rect x="15" y="9" width="1" height="1" fill="#808080"/><rect x="16" y="9" width="1" height="1" fill="#000000"/><rect x="2" y="10" width="1" height="1" fill="#000000"/><rect x="3" y="10" width="6" height="1" fill="#0000FF"/><rect x="9" y="10" width="2" height="1" fill="#000000"/><rect x="11" y="10" width="4" height="1" fill="#C0C0C0"/><rect x="15" y="10" width="1" height="1" fill="#808080"/><rect x="16" y="10" width="1" height="1" fill="#000000"/><rect x="2" y="11" width="1" height="1" fill="#000000"/><rect x="3" y="11" width="6" height="1" fill="#0000FF"/><rect x="9" y="11" width="2" height="1" fill="#000000"/><rect x="11" y="11" width="4" height="1" fill="#C0C0C0"/><rect x="15" y="11" width="1" height="1" fill="#808080"/><rect x="16" y="11" width="1" height="1" fill="#000000"/><rect x="2" y="12" width="1" height="1" fill="#000000"/><rect x="3" y="12" width="6" height="1" fill="#0000FF"/><rect x="9" y="12" width="2" height="1" fill="#000000"/><rect x="11" y="12" width="4" height="1" fill="#C0C0C0"/><rect x="15" y="12" width="1" height="1" fill="#808080"/><rect x="16" y="12" width="1" height="1" fill="#000000"/><rect x="2" y="13" width="9" height="1" fill="#000000"/><rect x="11" y="13" width="4" height="1" fill="#C0C0C0"/><rect x="15" y="13" width="1" height="1" fill="#808080"/><rect x="1" y="14" width="10" height="1" fill="#F8FCF8"/><rect x="12" y="14" width="4" height="1" fill="#000000"/><rect x="1" y="15" width="10" height="1" fill="#000000"/></svg>
<svg class="a" style="left:40px;top:69px" width="17" height="17" shape-rendering="crispEdges"><rect x="4" y="0" width="6" height="1" fill="#808080"/><rect x="2" y="1" width="2" height="1" fill="#808080"/><rect x="4" y="1" width="6" height="1" fill="#F8FCF8"/><rect x="10" y="1" width="2" height="1" fill="#808080"/><rect x="15" y="1" width="1" height="1" fill="#808080"/><rect x="1" y="2" width="2" height="1" fill="#808080"/><rect x="3" y="2" width="2" height="1" fill="#F8FCF8"/><rect x="5" y="2" width="3" height="1" fill="#808080"/><rect x="8" y="2" width="3" height="1" fill="#F8FCF8"/><rect x="11" y="2" width="2" height="1" fill="#808080"/><rect x="14" y="2" width="2" height="1" fill="#808080"/><rect x="1" y="3" width="1" height="1" fill="#808080"/><rect x="2" y="3" width="2" height="1" fill="#F8FCF8"/><rect x="4" y="3" width="6" height="1" fill="#808080"/><rect x="10" y="3" width="2" height="1" fill="#F8FCF8"/><rect x="12" y="3" width="4" height="1" fill="#808080"/><rect x="0" y="4" width="1" height="1" fill="#808080"/><rect x="1" y="4" width="2" height="1" fill="#F8FCF8"/><rect x="3" y="4" width="5" height="1" fill="#808080"/><rect x="8" y="4" width="1" height="1" fill="#F8FCF8"/><rect x="9" y="4" width="1" height="1" fill="#808080"/><rect x="10" y="4" width="2" height="1" fill="#F8FCF8"/><rect x="12" y="4" width="3" height="1" fill="#808080"/><rect x="15" y="4" width="1" height="1" fill="#F8FCF8"/><rect x="0" y="5" width="1" height="1" fill="#808080"/><rect x="1" y="5" width="1" height="1" fill="#F8FCF8"/><rect x="2" y="5" width="13" height="1" fill="#808080"/><rect x="15" y="5" width="1" height="1" fill="#F8FCF8"/><rect x="0" y="6" width="1" height="1" fill="#808080"/><rect x="1" y="6" width="1" height="1" fill="#F8FCF8"/><rect x="2" y="6" width="1" height="1" fill="#808080"/><rect x="3" y="6" width="4" height="1" fill="#F8FCF8"/><rect x="7" y="6" width="2" height="1" fill="#808080"/><rect x="9" y="6" width="5" height="1" fill="#F8FCF8"/><rect x="14" y="6" width="1" height="1" fill="#808080"/><rect x="15" y="6" width="1" height="1" fill="#F8FCF8"/><rect x="0" y="7" width="8" height="1" fill="#808080"/><rect x="8" y="7" width="1" height="1" fill="#F8FCF8"/><rect x="9" y="7" width="5" height="1" fill="#D0D0C8"/><rect x="14" y="7" width="1" height="1" fill="#808080"/><rect x="15" y="7" width="1" height="1" fill="#F8FCF8"/><rect x="0" y="8" width="9" height="1" fill="#808080"/><rect x="9" y="8" width="1" height="1" fill="#F8FCF8"/><rect x="10" y="8" width="4" height="1" fill="#D0D0C8"/><rect x="14" y="8" width="1" height="1" fill="#808080"/><rect x="15" y="8" width="1" height="1" fill="#F8FCF8"/><rect x="0" y="9" width="9" height="1" fill="#808080"/><rect x="9" y="9" width="1" height="1" fill="#F8FCF8"/><rect x="10" y="9" width="4" height="1" fill="#D0D0C8"/><rect x="14" y="9" width="1" height="1" fill="#808080"/><rect x="15" y="9" width="1" height="1" fill="#F8FCF8"/><rect x="0" y="10" width="9" height="1" fill="#808080"/><rect x="9" y="10" width="2" height="1" fill="#F8FCF8"/><rect x="11" y="10" width="2" height="1" fill="#D0D0C8"/><rect x="13" y="10" width="2" height="1" fill="#808080"/><rect x="15" y="10" width="1" height="1" fill="#F8FCF8"/><rect x="1" y="11" width="8" height="1" fill="#808080"/><rect x="9" y="11" width="2" height="1" fill="#F8FCF8"/><rect x="11" y="11" width="4" height="1" fill="#808080"/><rect x="15" y="11" width="1" height="1" fill="#F8FCF8"/><rect x="2" y="12" width="2" height="1" fill="#808080"/><rect x="4" y="12" width="6" height="1" fill="#F8FCF8"/><rect x="10" y="12" width="4" height="1" fill="#808080"/><rect x="14" y="12" width="1" height="1" fill="#F8FCF8"/><rect x="3" y="13" width="11" height="1" fill="#808080"/><rect x="14" y="13" width="1" height="1" fill="#F8FCF8"/><rect x="2" y="14" width="2" height="1" fill="#808080"/><rect x="4" y="14" width="1" height="1" fill="#F8FCF8"/><rect x="5" y="14" width="8" height="1" fill="#808080"/><rect x="13" y="14" width="1" height="1" fill="#F8FCF8"/><rect x="0" y="15" width="13" height="1" fill="#808080"/><rect x="13" y="15" width="1" height="1" fill="#F8FCF8"/><rect x="1" y="16" width="13" height="1" fill="#F8FCF8"/></svg>
<svg class="a" style="left:70px;top:68px" width="19" height="19" shape-rendering="crispEdges"><rect x="9" y="1" width="8" height="1" fill="#808080"/><rect x="9" y="2" width="1" height="1" fill="#808080"/><rect x="10" y="2" width="1" height="1" fill="#F8FCF8"/><rect x="11" y="2" width="1" height="1" fill="#808080"/><rect x="12" y="2" width="2" height="1" fill="#F8FCF8"/><rect x="14" y="2" width="1" height="1" fill="#808080"/><rect x="15" y="2" width="1" height="1" fill="#F8FCF8"/><rect x="16" y="2" width="1" height="1" fill="#808080"/><rect x="17" y="2" width="1" height="1" fill="#F8FCF8"/><rect x="9" y="3" width="1" height="1" fill="#808080"/><rect x="10" y="3" width="1" height="1" fill="#F8FCF8"/><rect x="11" y="3" width="1" height="1" fill="#808080"/><rect x="12" y="3" width="2" height="1" fill="#F8FCF8"/><rect x="14" y="3" width="1" height="1" fill="#808080"/><rect x="15" y="3" width="1" height="1" fill="#F8FCF8"/><rect x="16" y="3" width="1" height="1" fill="#808080"/><rect x="17" y="3" width="1" height="1" fill="#F8FCF8"/><rect x="9" y="4" width="8" height="1" fill="#808080"/><rect x="17" y="4" width="1" height="1" fill="#F8FCF8"/><rect x="9" y="5" width="1" height="1" fill="#808080"/><rect x="10" y="5" width="1" height="1" fill="#F8FCF8"/><rect x="11" y="5" width="1" height="1" fill="#808080"/><rect x="12" y="5" width="2" height="1" fill="#F8FCF8"/><rect x="14" y="5" width="1" height="1" fill="#808080"/><rect x="15" y="5" width="1" height="1" fill="#F8FCF8"/><rect x="16" y="5" width="1" height="1" fill="#808080"/><rect x="17" y="5" width="1" height="1" fill="#F8FCF8"/><rect x="9" y="6" width="1" height="1" fill="#808080"/><rect x="10" y="6" width="1" height="1" fill="#F8FCF8"/><rect x="11" y="6" width="1" height="1" fill="#808080"/><rect x="12" y="6" width="2" height="1" fill="#F8FCF8"/><rect x="14" y="6" width="1" height="1" fill="#808080"/><rect x="15" y="6" width="1" height="1" fill="#F8FCF8"/><rect x="16" y="6" width="1" height="1" fill="#808080"/><rect x="17" y="6" width="1" height="1" fill="#F8FCF8"/><rect x="2" y="7" width="8" height="1" fill="#808080"/><rect x="10" y="7" width="1" height="1" fill="#F8FCF8"/><rect x="11" y="7" width="1" height="1" fill="#808080"/><rect x="12" y="7" width="2" height="1" fill="#F8FCF8"/><rect x="14" y="7" width="1" height="1" fill="#808080"/><rect x="15" y="7" width="1" height="1" fill="#F8FCF8"/><rect x="16" y="7" width="1" height="1" fill="#808080"/><rect x="17" y="7" width="1" height="1" fill="#F8FCF8"/><rect x="2" y="8" width="8" height="1" fill="#808080"/><rect x="10" y="8" width="1" height="1" fill="#F8FCF8"/><rect x="11" y="8" width="1" height="1" fill="#808080"/><rect x="12" y="8" width="2" height="1" fill="#F8FCF8"/><rect x="14" y="8" width="1" height="1" fill="#808080"/><rect x="15" y="8" width="1" height="1" fill="#F8FCF8"/><rect x="16" y="8" width="1" height="1" fill="#808080"/><rect x="17" y="8" width="1" height="1" fill="#F8FCF8"/><rect x="2" y="9" width="8" height="1" fill="#808080"/><rect x="10" y="9" width="1" height="1" fill="#F8FCF8"/><rect x="11" y="9" width="1" height="1" fill="#808080"/><rect x="12" y="9" width="2" height="1" fill="#F8FCF8"/><rect x="14" y="9" width="1" height="1" fill="#808080"/><rect x="15" y="9" width="1" height="1" fill="#F8FCF8"/><rect x="16" y="9" width="1" height="1" fill="#808080"/><rect x="17" y="9" width="1" height="1" fill="#F8FCF8"/><rect x="2" y="10" width="8" height="1" fill="#808080"/><rect x="10" y="10" width="1" height="1" fill="#F8FCF8"/><rect x="11" y="10" width="1" height="1" fill="#808080"/><rect x="12" y="10" width="2" height="1" fill="#F8FCF8"/><rect x="14" y="10" width="1" height="1" fill="#808080"/><rect x="15" y="10" width="1" height="1" fill="#F8FCF8"/><rect x="16" y="10" width="1" height="1" fill="#808080"/><rect x="17" y="10" width="1" height="1" fill="#F8FCF8"/><rect x="2" y="11" width="15" height="1" fill="#808080"/><rect x="17" y="11" width="1" height="1" fill="#F8FCF8"/><rect x="2" y="12" width="8" height="1" fill="#808080"/><rect x="10" y="12" width="8" height="1" fill="#F8FCF8"/><rect x="2" y="13" width="8" height="1" fill="#808080"/><rect x="10" y="13" width="1" height="1" fill="#F8FCF8"/><rect x="1" y="14" width="10" height="1" fill="#808080"/><rect x="1" y="15" width="10" height="1" fill="#808080"/><rect x="11" y="15" width="1" height="1" fill="#F8FCF8"/><rect x="1" y="16" width="10" height="1" fill="#808080"/><rect x="11" y="16" width="1" height="1" fill="#F8FCF8"/><rect x="2" y="17" width="10" height="1" fill="#F8FCF8"/></svg>
<svg class="a" style="left:93px;top:68px" width="19" height="19" shape-rendering="crispEdges"><rect x="9" y="1" width="8" height="1" fill="#808080"/><rect x="9" y="2" width="1" height="1" fill="#808080"/><rect x="10" y="2" width="1" height="1" fill="#F8FCF8"/><rect x="11" y="2" width="1" height="1" fill="#808080"/><rect x="12" y="2" width="2" height="1" fill="#F8FCF8"/><rect x="14" y="2" width="1" height="1" fill="#808080"/><rect x="15" y="2" width="1" height="1" fill="#F8FCF8"/><rect x="16" y="2" width="1" height="1" fill="#808080"/><rect x="17" y="2" width="1" height="1" fill="#F8FCF8"/><rect x="9" y="3" width="1" height="1" fill="#808080"/><rect x="10" y="3" width="1" height="1" fill="#F8FCF8"/><rect x="11" y="3" width="1" height="1" fill="#808080"/><rect x="12" y="3" width="2" height="1" fill="#F8FCF8"/><rect x="14" y="3" width="1" height="1" fill="#808080"/><rect x="15" y="3" width="1" height="1" fill="#F8FCF8"/><rect x="16" y="3" width="1" height="1" fill="#808080"/><rect x="17" y="3" width="1" height="1" fill="#F8FCF8"/><rect x="9" y="4" width="8" height="1" fill="#808080"/><rect x="17" y="4" width="1" height="1" fill="#F8FCF8"/><rect x="9" y="5" width="1" height="1" fill="#808080"/><rect x="10" y="5" width="1" height="1" fill="#F8FCF8"/><rect x="11" y="5" width="1" height="1" fill="#808080"/><rect x="12" y="5" width="2" height="1" fill="#F8FCF8"/><rect x="14" y="5" width="1" height="1" fill="#808080"/><rect x="15" y="5" width="1" height="1" fill="#F8FCF8"/><rect x="16" y="5" width="1" height="1" fill="#808080"/><rect x="17" y="5" width="1" height="1" fill="#F8FCF8"/><rect x="2" y="6" width="8" height="1" fill="#808080"/><rect x="10" y="6" width="1" height="1" fill="#F8FCF8"/><rect x="11" y="6" width="1" height="1" fill="#808080"/><rect x="12" y="6" width="2" height="1" fill="#F8FCF8"/><rect x="14" y="6" width="1" height="1" fill="#808080"/><rect x="15" y="6" width="1" height="1" fill="#F8FCF8"/><rect x="16" y="6" width="1" height="1" fill="#808080"/><rect x="17" y="6" width="1" height="1" fill="#F8FCF8"/><rect x="2" y="7" width="1" height="1" fill="#808080"/><rect x="3" y="7" width="1" height="1" fill="#F8FCF8"/><rect x="4" y="7" width="1" height="1" fill="#808080"/><rect x="5" y="7" width="2" height="1" fill="#F8FCF8"/><rect x="7" y="7" width="1" height="1" fill="#808080"/><rect x="8" y="7" width="1" height="1" fill="#F8FCF8"/><rect x="9" y="7" width="1" height="1" fill="#808080"/><rect x="10" y="7" width="1" height="1" fill="#F8FCF8"/><rect x="11" y="7" width="1" height="1" fill="#808080"/><rect x="12" y="7" width="2" height="1" fill="#F8FCF8"/><rect x="14" y="7" width="1" height="1" fill="#808080"/><rect x="15" y="7" width="1" height="1" fill="#F8FCF8"/><rect x="16" y="7" width="1" height="1" fill="#808080"/><rect x="17" y="7" width="1" height="1" fill="#F8FCF8"/><rect x="2" y="8" width="1" height="1" fill="#808080"/><rect x="3" y="8" width="1" height="1" fill="#F8FCF8"/><rect x="4" y="8" width="1" height="1" fill="#808080"/><rect x="5" y="8" width="2" height="1" fill="#F8FCF8"/><rect x="7" y="8" width="1" height="1" fill="#808080"/><rect x="8" y="8" width="1" height="1" fill="#F8FCF8"/><rect x="9" y="8" width="1" height="1" fill="#808080"/><rect x="10" y="8" width="1" height="1" fill="#F8FCF8"/><rect x="11" y="8" width="1" height="1" fill="#808080"/><rect x="12" y="8" width="2" height="1" fill="#F8FCF8"/><rect x="14" y="8" width="1" height="1" fill="#808080"/><rect x="15" y="8" width="1" height="1" fill="#F8FCF8"/><rect x="16" y="8" width="1" height="1" fill="#808080"/><rect x="17" y="8" width="1" height="1" fill="#F8FCF8"/><rect x="2" y="9" width="8" height="1" fill="#808080"/><rect x="10" y="9" width="1" height="1" fill="#F8FCF8"/><rect x="11" y="9" width="1" height="1" fill="#808080"/><rect x="12" y="9" width="2" height="1" fill="#F8FCF8"/><rect x="14" y="9" width="1" height="1" fill="#808080"/><rect x="15" y="9" width="1" height="1" fill="#F8FCF8"/><rect x="16" y="9" width="1" height="1" fill="#808080"/><rect x="17" y="9" width="1" height="1" fill="#F8FCF8"/><rect x="2" y="10" width="1" height="1" fill="#808080"/><rect x="3" y="10" width="1" height="1" fill="#F8FCF8"/><rect x="4" y="10" width="1" height="1" fill="#808080"/><rect x="5" y="10" width="2" height="1" fill="#F8FCF8"/><rect x="7" y="10" width="1" height="1" fill="#808080"/><rect x="8" y="10" width="1" height="1" fill="#F8FCF8"/><rect x="9" y="10" width="1" height="1" fill="#808080"/><rect x="10" y="10" width="1" height="1" fill="#F8FCF8"/><rect x="11" y="10" width="1" height="1" fill="#808080"/><rect x="12" y="10" width="2" height="1" fill="#F8FCF8"/><rect x="14" y="10" width="1" height="1" fill="#808080"/><rect x="15" y="10" width="1" height="1" fill="#F8FCF8"/><rect x="16" y="10" width="1" height="1" fill="#808080"/><rect x="17" y="10" width="1" height="1" fill="#F8FCF8"/><rect x="2" y="11" width="1" height="1" fill="#808080"/><rect x="3" y="11" width="1" height="1" fill="#F8FCF8"/><rect x="4" y="11" width="1" height="1" fill="#808080"/><rect x="5" y="11" width="2" height="1" fill="#F8FCF8"/><rect x="7" y="11" width="1" height="1" fill="#808080"/><rect x="8" y="11" width="1" height="1" fill="#F8FCF8"/><rect x="9" y="11" width="8" height="1" fill="#808080"/><rect x="17" y="11" width="1" height="1" fill="#F8FCF8"/><rect x="2" y="12" width="1" height="1" fill="#808080"/><rect x="3" y="12" width="1" height="1" fill="#F8FCF8"/><rect x="4" y="12" width="1" height="1" fill="#808080"/><rect x="5" y="12" width="2" height="1" fill="#F8FCF8"/><rect x="7" y="12" width="1" height="1" fill="#808080"/><rect x="8" y="12" width="1" height="1" fill="#F8FCF8"/><rect x="9" y="12" width="1" height="1" fill="#808080"/><rect x="10" y="12" width="8" height="1" fill="#F8FCF8"/><rect x="2" y="13" width="1" height="1" fill="#808080"/><rect x="3" y="13" width="1" height="1" fill="#F8FCF8"/><rect x="4" y="13" width="1" height="1" fill="#808080"/><rect x="5" y="13" width="2" height="1" fill="#F8FCF8"/><rect x="7" y="13" width="1" height="1" fill="#808080"/><rect x="8" y="13" width="1" height="1" fill="#F8FCF8"/><rect x="9" y="13" width="1" height="1" fill="#808080"/><rect x="10" y="13" width="1" height="1" fill="#F8FCF8"/><rect x="2" y="14" width="1" height="1" fill="#808080"/><rect x="3" y="14" width="1" height="1" fill="#F8FCF8"/><rect x="4" y="14" width="1" height="1" fill="#808080"/><rect x="5" y="14" width="2" height="1" fill="#F8FCF8"/><rect x="7" y="14" width="1" height="1" fill="#808080"/><rect x="8" y="14" width="1" height="1" fill="#F8FCF8"/><rect x="9" y="14" width="1" height="1" fill="#808080"/><rect x="10" y="14" width="1" height="1" fill="#F8FCF8"/><rect x="2" y="15" width="1" height="1" fill="#808080"/><rect x="3" y="15" width="1" height="1" fill="#F8FCF8"/><rect x="4" y="15" width="1" height="1" fill="#808080"/><rect x="5" y="15" width="2" height="1" fill="#F8FCF8"/><rect x="7" y="15" width="1" height="1" fill="#808080"/><rect x="8" y="15" width="1" height="1" fill="#F8FCF8"/><rect x="9" y="15" width="1" height="1" fill="#808080"/><rect x="10" y="15" width="1" height="1" fill="#F8FCF8"/><rect x="2" y="16" width="8" height="1" fill="#808080"/><rect x="10" y="16" width="1" height="1" fill="#F8FCF8"/><rect x="3" y="17" width="8" height="1" fill="#F8FCF8"/></svg>
<svg class="a" style="left:124px;top:69px" width="17" height="17" viewBox="0 0 17 17" shape-rendering="crispEdges"><g shape-rendering="geometricPrecision" stroke="#000" stroke-width="1"><polygon points="1.5,8.5 9.5,1.5 15.5,1.5 11.5,8.5" fill="#F8F8F8" stroke-dasharray="1.2,0.8"/><line x1="9.5" y1="1.5" x2="15.5" y2="1.5"/><polygon points="11.5,8.5 15.5,1.5 15.5,9.5 11.5,15" fill="#C8C8C8"/><rect x="1.5" y="8.5" width="10" height="6" fill="#F8F8F8"/><polyline points="5,7.5 10,7.5 13.5,2" fill="none"/></g><g shape-rendering="crispEdges"><rect x="2" y="15" width="10" height="1" fill="#000"/><rect x="5" y="9" width="6" height="3" fill="#000"/><rect x="6" y="10" width="1" height="1" fill="#F00"/><rect x="9" y="10" width="1" height="1" fill="#FF0"/><rect x="2" y="12" width="3" height="1" fill="#C0C0C0"/></g></svg>
<svg class="a" style="left:253px;top:771px" width="16" height="16" shape-rendering="crispEdges"><rect x="6" y="0" width="10" height="1" fill="#000000"/><rect x="6" y="1" width="1" height="1" fill="#000000"/><rect x="7" y="1" width="8" height="1" fill="#C0C0C0"/><rect x="15" y="1" width="1" height="1" fill="#000000"/><rect x="6" y="2" width="1" height="1" fill="#000000"/><rect x="7" y="2" width="1" height="1" fill="#F8FCF8"/><rect x="8" y="2" width="2" height="1" fill="#808080"/><rect x="10" y="2" width="1" height="1" fill="#F8FCF8"/><rect x="11" y="2" width="2" height="1" fill="#808080"/><rect x="13" y="2" width="1" height="1" fill="#F8FCF8"/><rect x="14" y="2" width="1" height="1" fill="#808080"/><rect x="15" y="2" width="1" height="1" fill="#000000"/><rect x="6" y="3" width="1" height="1" fill="#000000"/><rect x="7" y="3" width="1" height="1" fill="#FF0000"/><rect x="8" y="3" width="2" height="1" fill="#808080"/><rect x="10" y="3" width="1" height="1" fill="#FF0000"/><rect x="11" y="3" width="2" height="1" fill="#808080"/><rect x="13" y="3" width="1" height="1" fill="#FF0000"/><rect x="14" y="3" width="1" height="1" fill="#808080"/><rect x="15" y="3" width="1" height="1" fill="#000000"/><rect x="6" y="4" width="1" height="1" fill="#000000"/><rect x="7" y="4" width="1" height="1" fill="#F8FCF8"/><rect x="8" y="4" width="2" height="1" fill="#808080"/><rect x="10" y="4" width="1" height="1" fill="#F8FCF8"/><rect x="11" y="4" width="2" height="1" fill="#808080"/><rect x="13" y="4" width="1" height="1" fill="#F8FCF8"/><rect x="14" y="4" width="1" height="1" fill="#808080"/><rect x="15" y="4" width="1" height="1" fill="#000000"/><rect x="6" y="5" width="1" height="1" fill="#000000"/><rect x="7" y="5" width="1" height="1" fill="#F8FCF8"/><rect x="8" y="5" width="2" height="1" fill="#808080"/><rect x="10" y="5" width="1" height="1" fill="#F8FCF8"/><rect x="11" y="5" width="2" height="1" fill="#808080"/><rect x="13" y="5" width="1" height="1" fill="#F8FCF8"/><rect x="14" y="5" width="1" height="1" fill="#808080"/><rect x="15" y="5" width="1" height="1" fill="#000000"/><rect x="6" y="6" width="1" height="1" fill="#000000"/><rect x="7" y="6" width="8" height="1" fill="#808080"/><rect x="15" y="6" width="1" height="1" fill="#000000"/><rect x="1" y="7" width="6" height="1" fill="#C0C0C0"/><rect x="7" y="7" width="1" height="1" fill="#000000"/><rect x="8" y="7" width="6" height="1" fill="#C0C0C0"/><rect x="14" y="7" width="1" height="1" fill="#808080"/><rect x="15" y="7" width="1" height="1" fill="#000000"/><rect x="1" y="8" width="1" height="1" fill="#000000"/><rect x="2" y="8" width="6" height="1" fill="#C0C0C0"/><rect x="8" y="8" width="1" height="1" fill="#000000"/><rect x="9" y="8" width="1" height="1" fill="#808080"/><rect x="10" y="8" width="1" height="1" fill="#F8FCF8"/><rect x="11" y="8" width="2" height="1" fill="#808080"/><rect x="13" y="8" width="1" height="1" fill="#F8FCF8"/><rect x="14" y="8" width="1" height="1" fill="#808080"/><rect x="15" y="8" width="1" height="1" fill="#000000"/><rect x="1" y="9" width="1" height="1" fill="#000000"/><rect x="2" y="9" width="1" height="1" fill="#C0C0C0"/><rect x="3" y="9" width="4" height="1" fill="#008080"/><rect x="7" y="9" width="1" height="1" fill="#C0C0C0"/><rect x="8" y="9" width="1" height="1" fill="#000000"/><rect x="9" y="9" width="1" height="1" fill="#808080"/><rect x="10" y="9" width="1" height="1" fill="#FF0000"/><rect x="11" y="9" width="2" height="1" fill="#808080"/><rect x="13" y="9" width="1" height="1" fill="#FF0000"/><rect x="14" y="9" width="1" height="1" fill="#808080"/><rect x="15" y="9" width="1" height="1" fill="#000000"/><rect x="1" y="10" width="1" height="1" fill="#000000"/><rect x="2" y="10" width="1" height="1" fill="#C0C0C0"/><rect x="3" y="10" width="4" height="1" fill="#008080"/><rect x="7" y="10" width="1" height="1" fill="#C0C0C0"/><rect x="8" y="10" width="1" height="1" fill="#000000"/><rect x="9" y="10" width="1" height="1" fill="#808080"/><rect x="10" y="10" width="1" height="1" fill="#F8FCF8"/><rect x="11" y="10" width="2" height="1" fill="#808080"/><rect x="13" y="10" width="1" height="1" fill="#F8FCF8"/><rect x="14" y="10" width="1" height="1" fill="#808080"/><rect x="15" y="10" width="1" height="1" fill="#000000"/><rect x="1" y="11" width="1" height="1" fill="#000000"/><rect x="2" y="11" width="1" height="1" fill="#C0C0C0"/><rect x="3" y="11" width="4" height="1" fill="#008080"/><rect x="7" y="11" width="1" height="1" fill="#C0C0C0"/><rect x="8" y="11" width="1" height="1" fill="#000000"/><rect x="9" y="11" width="1" height="1" fill="#808080"/><rect x="10" y="11" width="1" height="1" fill="#F8FCF8"/><rect x="11" y="11" width="2" height="1" fill="#808080"/><rect x="13" y="11" width="1" height="1" fill="#F8FCF8"/><rect x="14" y="11" width="1" height="1" fill="#808080"/><rect x="15" y="11" width="1" height="1" fill="#000000"/><rect x="1" y="12" width="1" height="1" fill="#000000"/><rect x="2" y="12" width="6" height="1" fill="#C0C0C0"/><rect x="8" y="12" width="1" height="1" fill="#000000"/><rect x="9" y="12" width="1" height="1" fill="#808080"/><rect x="10" y="12" width="1" height="1" fill="#F8FCF8"/><rect x="11" y="12" width="2" height="1" fill="#808080"/><rect x="13" y="12" width="1" height="1" fill="#F8FCF8"/><rect x="14" y="12" width="1" height="1" fill="#808080"/><rect x="15" y="12" width="1" height="1" fill="#000000"/><rect x="0" y="13" width="9" height="1" fill="#C0C0C0"/><rect x="9" y="13" width="7" height="1" fill="#000000"/><rect x="0" y="14" width="9" height="1" fill="#C0C0C0"/><rect x="9" y="14" width="2" height="1" fill="#000000"/><rect x="11" y="14" width="2" height="1" fill="#C0C0C0"/><rect x="13" y="14" width="3" height="1" fill="#000000"/><rect x="0" y="15" width="16" height="1" fill="#000000"/></svg>
<svg class="a" style="left:864px;top:770px" width="16" height="14" shape-rendering="crispEdges"><rect x="10" y="0" width="3" height="1" fill="#C0C0C0"/><rect x="13" y="0" width="2" height="1" fill="#000000"/><rect x="9" y="1" width="1" height="1" fill="#C0C0C0"/><rect x="10" y="1" width="3" height="1" fill="#00FFFF"/><rect x="13" y="1" width="1" height="1" fill="#C0C0C0"/><rect x="14" y="1" width="1" height="1" fill="#000000"/><rect x="1" y="2" width="7" height="1" fill="#FF0000"/><rect x="9" y="2" width="1" height="1" fill="#C0C0C0"/><rect x="10" y="2" width="3" height="1" fill="#00FFFF"/><rect x="13" y="2" width="1" height="1" fill="#C0C0C0"/><rect x="14" y="2" width="1" height="1" fill="#000000"/><rect x="2" y="3" width="2" height="1" fill="#FF0000"/><rect x="7" y="3" width="2" height="1" fill="#FF0000"/><rect x="9" y="3" width="5" height="1" fill="#C0C0C0"/><rect x="14" y="3" width="1" height="1" fill="#000000"/><rect x="2" y="4" width="2" height="1" fill="#FF0000"/><rect x="7" y="4" width="2" height="1" fill="#FF0000"/><rect x="9" y="4" width="4" height="1" fill="#C0C0C0"/><rect x="13" y="4" width="2" height="1" fill="#000000"/><rect x="2" y="5" width="2" height="1" fill="#FF0000"/><rect x="6" y="5" width="2" height="1" fill="#FF0000"/><rect x="8" y="5" width="6" height="1" fill="#000000"/><rect x="2" y="6" width="5" height="1" fill="#FF0000"/><rect x="8" y="6" width="1" height="1" fill="#00FFFF"/><rect x="9" y="6" width="4" height="1" fill="#0000FF"/><rect x="13" y="6" width="1" height="1" fill="#000000"/><rect x="2" y="7" width="2" height="1" fill="#FF0000"/><rect x="5" y="7" width="2" height="1" fill="#FF0000"/><rect x="8" y="7" width="5" height="1" fill="#0000FF"/><rect x="13" y="7" width="1" height="1" fill="#000000"/><rect x="2" y="8" width="2" height="1" fill="#FF0000"/><rect x="6" y="8" width="2" height="1" fill="#FF0000"/><rect x="8" y="8" width="5" height="1" fill="#0000FF"/><rect x="13" y="8" width="1" height="1" fill="#000000"/><rect x="2" y="9" width="2" height="1" fill="#FF0000"/><rect x="7" y="9" width="1" height="1" fill="#FF0000"/><rect x="8" y="9" width="5" height="1" fill="#C0C0C0"/><rect x="13" y="9" width="1" height="1" fill="#000000"/><rect x="1" y="10" width="4" height="1" fill="#FF0000"/><rect x="8" y="10" width="1" height="1" fill="#FF0000"/><rect x="9" y="10" width="5" height="1" fill="#000000"/><rect x="5" y="11" width="9" height="1" fill="#C0C0C0"/><rect x="5" y="12" width="1" height="1" fill="#C0C0C0"/><rect x="6" y="12" width="1" height="1" fill="#F8FCF8"/><rect x="7" y="12" width="1" height="1" fill="#00FF00"/><rect x="8" y="12" width="2" height="1" fill="#C0C0C0"/><rect x="10" y="12" width="3" height="1" fill="#000000"/><rect x="13" y="12" width="1" height="1" fill="#C0C0C0"/><rect x="5" y="13" width="9" height="1" fill="#C0C0C0"/></svg>
<svg class="a" style="left:10px;top:771px" width="16" height="13" shape-rendering="crispEdges"><rect x="8" y="0" width="7" height="1" fill="#000000"/><rect x="7" y="1" width="2" height="1" fill="#000000"/><rect x="9" y="1" width="2" height="1" fill="#FF0000"/><rect x="11" y="1" width="2" height="1" fill="#000000"/><rect x="13" y="1" width="2" height="1" fill="#00FF00"/><rect x="15" y="1" width="1" height="1" fill="#000000"/><rect x="0" y="2" width="1" height="1" fill="#000000"/><rect x="2" y="2" width="1" height="1" fill="#000000"/><rect x="7" y="2" width="1" height="1" fill="#000000"/><rect x="8" y="2" width="3" height="1" fill="#FF0000"/><rect x="11" y="2" width="1" height="1" fill="#000000"/><rect x="12" y="2" width="3" height="1" fill="#00FF00"/><rect x="15" y="2" width="1" height="1" fill="#000000"/><rect x="7" y="3" width="1" height="1" fill="#000000"/><rect x="8" y="3" width="3" height="1" fill="#FF0000"/><rect x="11" y="3" width="1" height="1" fill="#000000"/><rect x="12" y="3" width="3" height="1" fill="#00FF00"/><rect x="15" y="3" width="1" height="1" fill="#000000"/><rect x="0" y="4" width="1" height="1" fill="#FF0000"/><rect x="2" y="4" width="3" height="1" fill="#FF0000"/><rect x="6" y="4" width="2" height="1" fill="#000000"/><rect x="8" y="4" width="2" height="1" fill="#FF0000"/><rect x="10" y="4" width="2" height="1" fill="#000000"/><rect x="12" y="4" width="2" height="1" fill="#00FF00"/><rect x="14" y="4" width="2" height="1" fill="#000000"/><rect x="0" y="5" width="1" height="1" fill="#FF0000"/><rect x="2" y="5" width="4" height="1" fill="#FF0000"/><rect x="6" y="5" width="9" height="1" fill="#000000"/><rect x="6" y="6" width="2" height="1" fill="#000000"/><rect x="8" y="6" width="2" height="1" fill="#0000FF"/><rect x="10" y="6" width="2" height="1" fill="#000000"/><rect x="12" y="6" width="2" height="1" fill="#FFFF00"/><rect x="14" y="6" width="2" height="1" fill="#000000"/><rect x="0" y="7" width="1" height="1" fill="#0000FF"/><rect x="2" y="7" width="4" height="1" fill="#0000FF"/><rect x="6" y="7" width="1" height="1" fill="#000000"/><rect x="7" y="7" width="3" height="1" fill="#0000FF"/><rect x="10" y="7" width="1" height="1" fill="#000000"/><rect x="11" y="7" width="3" height="1" fill="#FFFF00"/><rect x="14" y="7" width="1" height="1" fill="#000000"/><rect x="0" y="8" width="1" height="1" fill="#0000FF"/><rect x="2" y="8" width="3" height="1" fill="#0000FF"/><rect x="6" y="8" width="1" height="1" fill="#000000"/><rect x="7" y="8" width="3" height="1" fill="#0000FF"/><rect x="10" y="8" width="1" height="1" fill="#000000"/><rect x="11" y="8" width="3" height="1" fill="#FFFF00"/><rect x="14" y="8" width="1" height="1" fill="#000000"/><rect x="6" y="9" width="1" height="1" fill="#000000"/><rect x="7" y="9" width="3" height="1" fill="#0000FF"/><rect x="10" y="9" width="1" height="1" fill="#000000"/><rect x="11" y="9" width="3" height="1" fill="#FFFF00"/><rect x="14" y="9" width="1" height="1" fill="#000000"/><rect x="0" y="10" width="1" height="1" fill="#000000"/><rect x="2" y="10" width="2" height="1" fill="#000000"/><rect x="6" y="10" width="2" height="1" fill="#000000"/><rect x="8" y="10" width="2" height="1" fill="#0000FF"/><rect x="10" y="10" width="2" height="1" fill="#000000"/><rect x="12" y="10" width="2" height="1" fill="#FFFF00"/><rect x="14" y="10" width="1" height="1" fill="#000000"/><rect x="6" y="11" width="9" height="1" fill="#000000"/><rect x="7" y="12" width="1" height="1" fill="#000000"/><rect x="12" y="12" width="2" height="1" fill="#000000"/></svg>
<svg class="a" style="left:78px;top:770px" width="17" height="17" viewBox="0 0 17 17" shape-rendering="crispEdges"><g shape-rendering="crispEdges"><rect x="0" y="2" width="15" height="13" fill="#3399CC"/><rect x="15" y="3" width="1" height="13" fill="#000"/><rect x="1" y="15" width="15" height="1" fill="#000"/></g><g shape-rendering="geometricPrecision"><ellipse cx="7.5" cy="8.5" rx="7" ry="6.5" fill="#F0ECC8"/><rect x="4.5" y="6.5" width="5" height="6" fill="#F8FCF8" stroke="#000"/><line x1="6" y1="9" x2="13.5" y2="1.5" stroke="#E8A000" stroke-width="2.2"/><circle cx="14" cy="1.5" r="1.3" fill="#F00"/></g></svg>
<svg class="a" style="left:101px;top:769px" width="17" height="18" viewBox="0 0 17 18" shape-rendering="crispEdges"><text x="9.5" y="16" text-anchor="middle" font-family="Liberation Sans" font-weight="bold" font-size="24" fill="#0018F0" transform="translate(9.5 0) scale(1.05 1) translate(-9.5 0)">e</text><g shape-rendering="geometricPrecision"><path d="M0.8,14.5 C2,10 4.5,6.5 8.5,4" stroke="#E0D800" stroke-width="1.4" fill="none"/><path d="M11,2.5 C14,1 17,1 16,4.5" stroke="#0018F0" stroke-width="1.6" fill="none"/></g></svg>
<svg class="a" style="left:124px;top:770px" width="17" height="16" viewBox="0 0 17 16" shape-rendering="crispEdges"><g shape-rendering="geometricPrecision"><ellipse cx="8" cy="8" rx="7.5" ry="7" fill="#20A020"/><path d="M4,2.5 C7,4 9,6 8.5,9 C8,12 10,14 12,14.5 L9,15 C6,14 5,12 5.5,10 Z" fill="#1080F0"/><path d="M8,3 C10,5 11,7 10,10 L13,13 L11,14" fill="#2060F0"/><line x1="1.5" y1="13.5" x2="15" y2="2.5" stroke="#000" stroke-width="1"/><line x1="1" y1="12.5" x2="14.5" y2="1.5" stroke="#F0C000" stroke-width="2"/><path d="M1,9 C2,6 3,5 4,4" stroke="#C0E8F8" stroke-width="1.5" fill="none"/></g></svg>
<svg class="a" style="left:147px;top:770px" width="16" height="16" viewBox="0 0 16 16" shape-rendering="crispEdges"><g shape-rendering="crispEdges"><rect x="0" y="0" width="16" height="16" fill="#2050C0"/><rect x="1" y="1" width="14" height="14" fill="#80A8E8"/><rect x="2" y="2" width="12" height="12" fill="#F8F8F8"/></g><text x="8" y="12.5" text-anchor="middle" font-family="Liberation Sans" font-style="italic" font-weight="bold" font-size="12" fill="#2858C8" transform="translate(8 0) scale(1.25 1) translate(-8 0)">W</text></svg>
<svg class="a" style="left:170px;top:770px" width="16" height="17" viewBox="0 0 16 17" shape-rendering="crispEdges"><g shape-rendering="crispEdges"><rect x="1" y="1" width="15" height="16" fill="#000"/><rect x="0" y="0" width="15" height="15" fill="#0000FF"/><rect x="3" y="0" width="8" height="5" fill="#000"/><rect x="4" y="0" width="6" height="4" fill="#C0C0C0"/><rect x="7" y="1" width="2" height="2" fill="#0000FF"/><rect x="2" y="7" width="11" height="8" fill="#F8FCF8"/><rect x="2" y="9" width="11" height="1" fill="#F00"/><rect x="2" y="12" width="11" height="3" fill="#F00"/></g></svg>
<svg class="a" style="left:193px;top:770px" width="17" height="17" viewBox="0 0 17 17" shape-rendering="crispEdges"><g shape-rendering="crispEdges"><rect x="0" y="3" width="16" height="10" fill="#000"/><rect x="0" y="3" width="15" height="9" fill="#F8FCF8"/><rect x="1" y="4" width="13" height="7" fill="#F8F8C0"/><circle cx="12" cy="6" r="1.5" fill="#F00"/></g><g shape-rendering="geometricPrecision"><path d="M2,6 C3,2 6,1 9,1" stroke="#00E0F0" stroke-width="2" fill="none"/><polygon points="1,3 6,8 1,8" fill="#0000F0"/><path d="M15,11 C14,15 11,16 7,16" stroke="#0000F0" stroke-width="2" fill="none"/><polygon points="15,14 10,9 15,9" fill="#00E0F0"/></g></svg>
<svg class="a" style="left:228px;top:772px" width="9" height="5" shape-rendering="crispEdges"><rect x="0" y="0" width="2" height="1" fill="#000000"/><rect x="5" y="0" width="2" height="1" fill="#000000"/><rect x="1" y="1" width="2" height="1" fill="#000000"/><rect x="6" y="1" width="2" height="1" fill="#000000"/><rect x="2" y="2" width="2" height="1" fill="#000000"/><rect x="7" y="2" width="2" height="1" fill="#000000"/><rect x="1" y="3" width="2" height="1" fill="#000000"/><rect x="6" y="3" width="2" height="1" fill="#000000"/><rect x="0" y="4" width="2" height="1" fill="#000000"/><rect x="5" y="4" width="2" height="1" fill="#000000"/></svg>
<svg class="a" style="left:882px;top:771px" width="16" height="16" viewBox="0 0 16 16" shape-rendering="crispEdges"><g shape-rendering="crispEdges"><rect x="7" y="0" width="9" height="8" fill="#000"/><rect x="8" y="1" width="7" height="6" fill="#C0C0C0"/><rect x="9" y="2" width="5" height="4" fill="#00FFFF"/><rect x="8" y="8" width="8" height="3" fill="#C0C0C0"/><rect x="8" y="11" width="8" height="1" fill="#000"/><rect x="1" y="4" width="9" height="8" fill="#000"/><rect x="2" y="5" width="7" height="6" fill="#C0C0C0"/><rect x="3" y="6" width="5" height="4" fill="#00FFFF"/><rect x="0" y="12" width="10" height="2" fill="#C0C0C0"/><rect x="0" y="14" width="10" height="1" fill="#000"/></g></svg>
<svg class="a" style="left:900px;top:770px" width="17" height="16" viewBox="0 0 17 16" shape-rendering="crispEdges"><g shape-rendering="geometricPrecision"><polygon points="0.5,6 4,6 9,1 9,14 4,9 0.5,9" fill="#F0F000" stroke="#000" stroke-width="1"/><ellipse cx="9" cy="7.5" rx="1.5" ry="6" fill="#F8FCF8" stroke="#000"/><line x1="12" y1="4" x2="15" y2="1.5" stroke="#A0A0A0"/><line x1="12" y1="7.5" x2="16" y2="7.5" stroke="#A0A0A0"/><line x1="12" y1="11" x2="15" y2="13.5" stroke="#A0A0A0"/></g></svg>
<div class="a" style="left:918px;top:770px;width:16px;height:16px;background:#000080;"></div>
<div class="t" style="left:918px;top:772px;font-size:11px;font-weight:normal;color:#fff;letter-spacing:-0.2px;font-size:10px;">EN</div>
<svg class="a" style="left:936px;top:770px" width="17" height="16" viewBox="0 0 17 16" shape-rendering="crispEdges"><g shape-rendering="crispEdges"><rect x="0" y="0" width="9" height="15" fill="#000"/><rect x="1" y="1" width="7" height="13" fill="#C0C0C0"/><rect x="1" y="4" width="7" height="1" fill="#808080"/><rect x="1" y="8" width="7" height="1" fill="#808080"/><rect x="3" y="13" width="1" height="1" fill="#F00"/></g><g shape-rendering="geometricPrecision"><circle cx="11" cy="10" r="5.3" fill="#F8FCF8" stroke="#000"/><polygon points="9,7 14,10 9,13" fill="#008000"/></g></svg>
<svg class="a" style="left:955px;top:769px" width="14" height="17" viewBox="0 0 14 17" shape-rendering="crispEdges"><g shape-rendering="crispEdges"><rect x="0" y="0" width="14" height="17" fill="#000080"/><rect x="1" y="1" width="12" height="15" fill="#C0C0C0"/><rect x="1" y="1" width="2" height="15" fill="#00FFFF"/><rect x="10" y="1" width="2" height="15" fill="#00A0A0"/><rect x="5" y="2" width="2" height="14" fill="#F8FCF8"/><rect x="7" y="6" width="3" height="1" fill="#F8FCF8"/><rect x="7" y="10" width="3" height="1" fill="#F8FCF8"/></g></svg>
</body></html>
